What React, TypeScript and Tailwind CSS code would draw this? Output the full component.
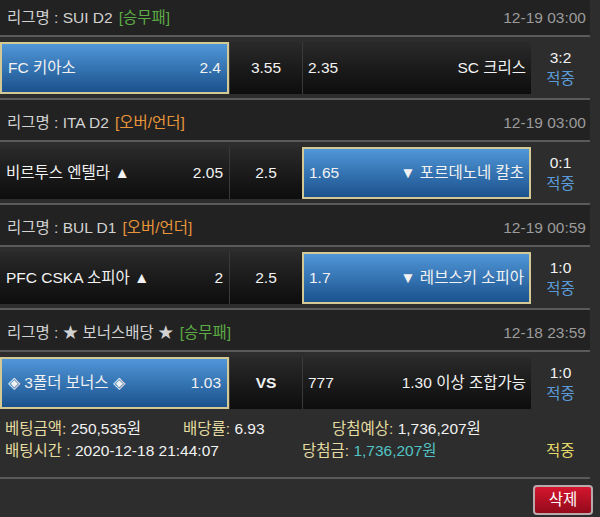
import React from 'react';

type Bet = {
    league: string;
    type: string;
    typeColor: 'green' | 'orange';
    date: string;
    home: string;
    homeOdd: string;
    mid: string;
    awayOdd: string;
    away: string;
    pick: 'home' | 'away';
    score: string;
    vs?: boolean;
};

const bets: Bet[] = [
    { league: 'SUI D2', type: '[승무패]', typeColor: 'green', date: '12-19 03:00', home: 'FC 키아소', homeOdd: '2.4', mid: '3.55', awayOdd: '2.35', away: 'SC 크리스', pick: 'home', score: '3:2' },
    { league: 'ITA D2', type: '[오버/언더]', typeColor: 'orange', date: '12-19 03:00', home: '비르투스 엔텔라 ▲', homeOdd: '2.05', mid: '2.5', awayOdd: '1.65', away: '▼ 포르데노네 칼초', pick: 'away', score: '0:1' },
    { league: 'BUL D1', type: '[오버/언더]', typeColor: 'orange', date: '12-19 00:59', home: 'PFC CSKA 소피아 ▲', homeOdd: '2', mid: '2.5', awayOdd: '1.7', away: '▼ 레브스키 소피아', pick: 'away', score: '1:0' },
    { league: '★ 보너스배당 ★', type: '[승무패]', typeColor: 'green', date: '12-18 23:59', home: '◈ 3폴더 보너스 ◈', homeOdd: '1.03', mid: 'VS', awayOdd: '777', away: '1.30 이상 조합가능', pick: 'home', score: '1:0', vs: true },
];

const darkCell = 'bg-linear-to-b from-[#2a2a2a] to-[#0d0d0d]';
const pickedCell = 'bg-linear-to-b from-[#5097d9] to-[#1b528d] border-2 border-[#d3c995]';

const BetBlock: React.FC<{ bet: Bet }> = ({ bet }) => (
    <div>
        {/* 리그 헤더 */}
        <div className="h-[40px] pt-[6px] pl-[7px] pr-[4px] flex items-center bg-[#222222] text-[15.5px]">
            <span className="text-[#d2d2d2]">리그명 : {bet.league}</span>
            <span className={bet.typeColor === 'green' ? 'ml-[6px] text-[#5cab45]' : 'ml-[6px] text-[#e8953a]'}>{bet.type}</span>
            <span className="ml-auto text-[#9b9b9b]">{bet.date}</span>
        </div>
        <div className="h-[2px] bg-[#5a5a5a]" />

        {/* 경기 */}
        <div className="pt-[5px] pb-[4px] flex text-[15.5px] text-[#f2f2f2]">
            <div className={`w-[229px] h-[52px] flex items-center justify-between px-[6px] ${bet.pick === 'home' ? pickedCell : darkCell}`}>
                <span>{bet.home}</span>
                <span>{bet.homeOdd}</span>
            </div>
            <div className={`w-[73px] h-[52px] flex items-center justify-center border-l border-[#3a3a3a] ${darkCell}`}>
                <span className={bet.vs ? 'font-bold' : ''}>{bet.mid}</span>
            </div>
            <div className={`w-[229px] h-[52px] flex items-center justify-between px-[5px] ${bet.pick === 'away' ? pickedCell : `border-l border-[#3a3a3a] ${darkCell}`}`}>
                <span>{bet.awayOdd}</span>
                <span>{bet.away}</span>
            </div>
            <div className="w-[59px] h-[52px] flex flex-col items-center justify-center leading-[21px]">
                <span>{bet.score}</span>
                <span className="text-[#5a9ad6]">적중</span>
            </div>
        </div>
    </div>
);

const App: React.FC = () => {
    return (
        <div className="w-[600px] h-[517px] overflow-hidden bg-[#2d2d2d] font-['Liberation_Sans','Noto_Sans_CJK_KR',sans-serif]">
            <div className="w-[590px] -mt-[5px]">
                {bets.map((bet, i) => (
                    <div key={i}>
                        <BetBlock bet={bet} />
                        {i < bets.length - 1 && <div className="h-[2px] bg-[#5a5a5a]" />}
                    </div>
                ))}

                {/* 베팅 정보 */}
                <div className="pt-[5px] pb-[15px] pl-[5px] text-[15.5px] leading-[22px] text-[#f2f2f2]">
                    <div className="flex">
                        <span className="w-[178px]"><span className="text-[#e4dba0]">베팅금액:</span> 250,535원</span>
                        <span className="w-[149px]"><span className="text-[#e4dba0]">배당률:</span> 6.93</span>
                        <span><span className="text-[#e4dba0]">당첨예상:</span> 1,736,207원</span>
                    </div>
                    <div className="flex">
                        <span className="w-[297px]"><span className="text-[#e4dba0]">배팅시간 :</span> 2020-12-18 21:44:07</span>
                        <span className="w-[244px]"><span className="text-[#e4dba0]">당첨금:</span> <span className="text-[#52c3c3]">1,736,207원</span></span>
                        <span className="text-[#e3d86b]">적중</span>
                    </div>
                </div>
                <div className="h-[2px] bg-[#5a5a5a]" />

                {/* 삭제 */}
                <div className="flex justify-end pt-[6px] -mr-[3px]">
                    <button className="w-[60px] h-[30px] rounded-[4px] border-2 border-[#b9a9ab] bg-linear-to-b from-[#d4162e] to-[#940a1b] text-white text-[15.5px]">
                        삭제
                    </button>
                </div>
            </div>
        </div>
    );
};

export default App;
